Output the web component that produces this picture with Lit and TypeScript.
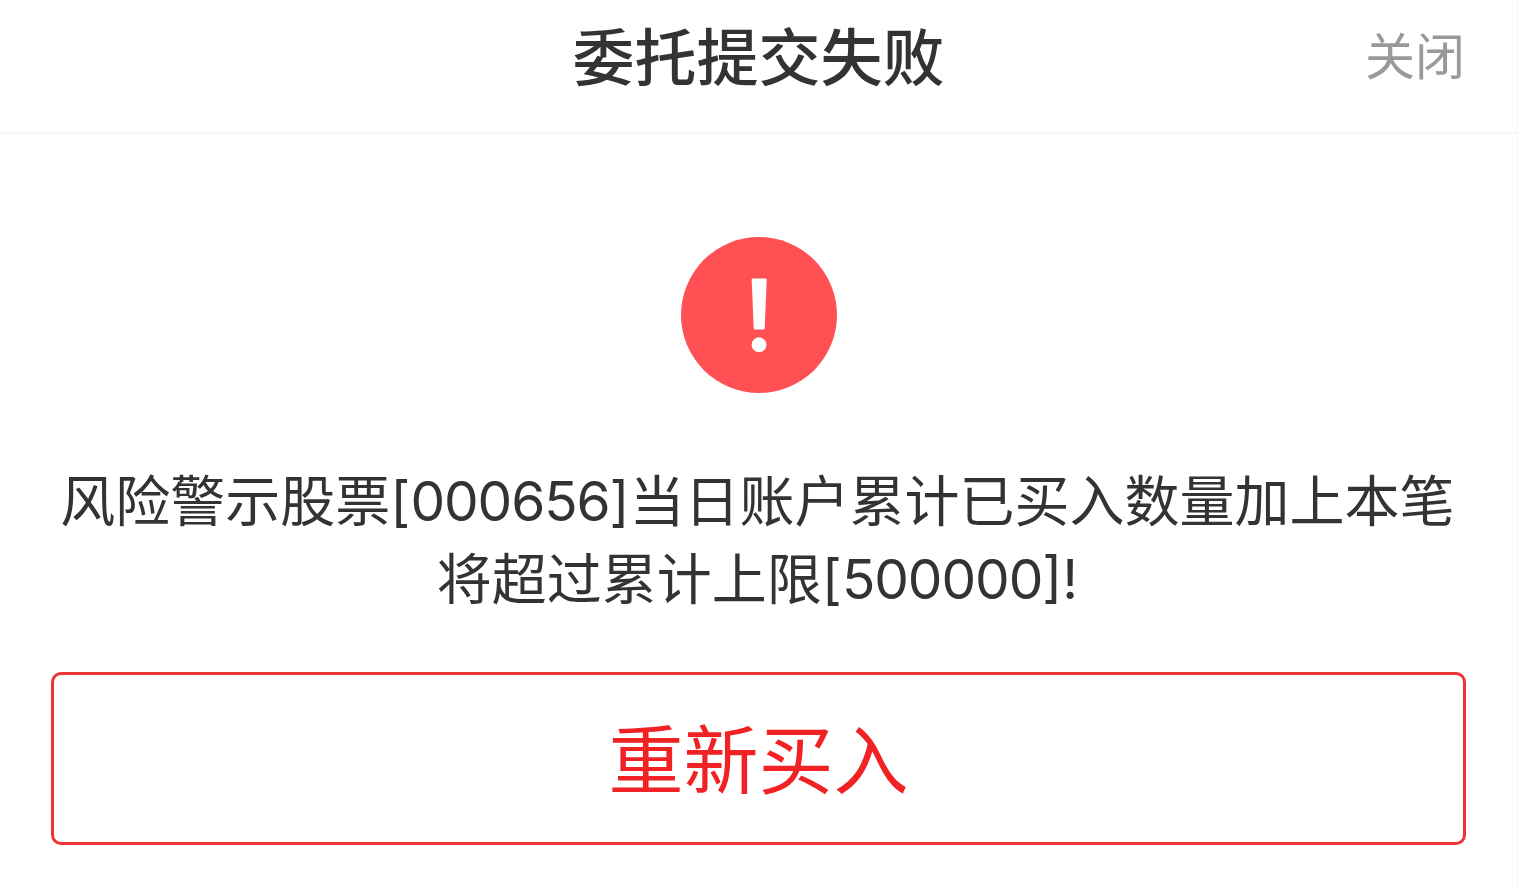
import { LitElement, html, css } from 'lit';
import { customElement, property } from 'lit/decorators.js';

@customElement('alert-icon')
export class AlertIcon extends LitElement {
  static styles = css`
    :host {
      display: block;
      width: 156px;
      height: 156px;
    }

    .icon {
      display: block;
      width: 100%;
      height: 100%;
    }
  `;

  render() {
    return html`
      <svg class="icon" viewBox="0 0 156 156">
        <circle cx="78" cy="78" r="78" fill="#ff5153" />
        <path
          d="M71.800 41.400H84.600Q85.700 41.400 85.700 42.500L83.700 91.500Q83.600 92.500 82.600 92.500H73.800Q72.800 92.500 72.700 91.500L70.700 42.500Q70.700 41.400 71.800 41.400Z"
          fill="#fff"
        />
        <circle cx="78" cy="107.700" r="7.400" fill="#fff" />
      </svg>
    `;
  }
}

@customElement('app-root')
export class AppRoot extends LitElement {
  @property() heading = '委托提交失败';
  @property({ type: Array }) lines = [
    '风险警示股票[000656]当日账户累计已买入数量加上本笔',
    '将超过累计上限[500000]!',
  ];

  static styles = css`
    :host {
      display: flex;
      flex-direction: column;
      box-sizing: border-box;
      height: 890px;
      border-right: 1px solid #f7f7f7;
      background: #fff;
      color: #333;
      font-family: Inter, 'Noto Sans CJK SC', sans-serif;
    }

    .header {
      display: grid;
      grid-template-columns: 1fr auto 1fr;
      align-items: center;
      box-sizing: border-box;
      height: 134px;
      padding: 0 52px 15px;
      border-bottom: 2px solid #f6f6f6;
    }

    .title {
      grid-column: 2;
      margin: 0;
      font-size: 62px;
      font-weight: 500;
      line-height: 80px;
    }

    .close {
      justify-self: end;
      padding: 0 0 3px;
      border: 0;
      background: none;
      color: #999;
      font: inherit;
      font-size: 50px;
      line-height: 70px;
    }

    .body {
      display: flex;
      flex-direction: column;
      align-items: center;
      padding: 103px 51px 0;
    }

    .message {
      margin: 69px 0 54px;
      padding-right: 2px;
      font-size: 55px;
      line-height: 78px;
      text-align: center;
      white-space: nowrap;
    }

    .number {
      letter-spacing: -1.1px;
    }

    .retry {
      align-self: stretch;
      height: 173px;
      padding: 0 0 7px;
      border: 3px solid #ee3536;
      border-radius: 10px;
      background: #fff;
      color: #f12224;
      font: inherit;
      font-size: 75px;
    }
  `;

  // Digits are set a little tighter than the surrounding text.
  renderLine(line: string) {
    return line
      .split(/(\d+)/)
      .map((part) => (/^\d+$/.test(part) ? html`<span class="number">${part}</span>` : part));
  }

  render() {
    return html`
      <div class="header">
        <h1 class="title">${this.heading}</h1>
        <button class="close">关闭</button>
      </div>
      <div class="body">
        <alert-icon></alert-icon>
        <div class="message">
          ${this.lines.map((line) => html`<div>${this.renderLine(line)}</div>`)}
        </div>
        <button class="retry">重新买入</button>
      </div>
    `;
  }
}

declare global {
  interface HTMLElementTagNameMap {
    'alert-icon': AlertIcon;
    'app-root': AppRoot;
  }
}
